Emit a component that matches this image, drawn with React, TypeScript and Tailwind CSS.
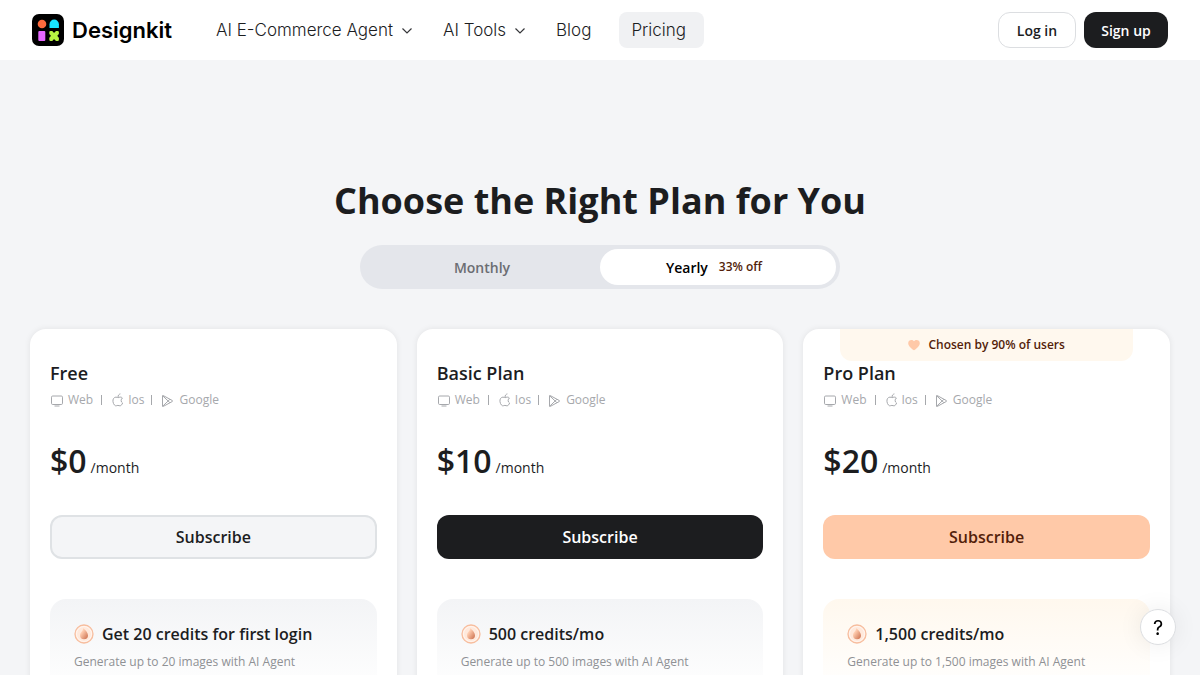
import { useState } from 'react';

type Plan = {
  name: string;
  price: number;
  credits: string;
  detail: string;
  button: string;
  panel: string;
  badge?: string;
};

const plans: Plan[] = [
  {
    name: 'Free',
    price: 0,
    credits: 'Get 20 credits for first login',
    detail: 'Generate up to 20 images with AI Agent',
    button: 'border-2 border-[#dfe2e5] bg-[#f4f5f7] text-[#1c1d1f]',
    panel: 'from-[#f3f4f6]',
  },
  {
    name: 'Basic Plan',
    price: 10,
    credits: '500 credits/mo',
    detail: 'Generate up to 500 images with AI Agent',
    button: 'bg-[#1c1d1f] text-white',
    panel: 'from-[#f3f4f6]',
  },
  {
    name: 'Pro Plan',
    price: 20,
    credits: '1,500 credits/mo',
    detail: 'Generate up to 1,500 images with AI Agent',
    button: 'bg-[#ffc9a8] text-[#531e0a]',
    panel: 'from-[#fff8ee]',
    badge: 'Chosen by 90% of users',
  },
];

function Logo() {
  return (
    <svg className="size-8" viewBox="0 0 32 32" aria-hidden="true">
      <rect width="32" height="32" rx="7" fill="#000" />
      <circle cx="10" cy="10" r="4.3" fill="#ff6a3d" />
      <path d="M17.5 14V10.2a4.7 4.7 0 0 1 9.4 0V14Z" fill="#18e5ff" />
      <rect x="6.3" y="17" width="7" height="10" rx="1" fill="#e667ff" />
      <path
        d="M17.3 18.2q0-1.2 1.2-1.2h1.4q.9 0 1.2.9.9 1.5 2 0 .4-.9 1.2-.9h1.4q1.2 0 1.2 1.2v1.3q0 .8-.8 1.2-1.5 1.1 0 2.2.8.4.8 1.2v1.7q0 1.2-1.2 1.2h-1.4q-.8 0-1.2-.9-1.1-1.5-2 0-.3.9-1.2.9h-1.4q-1.2 0-1.2-1.2v-1.7q0-.8.8-1.2 1.5-1.1 0-2.2-.8-.4-.8-1.2Z"
        fill="#b6f542"
      />
    </svg>
  );
}

function Chevron() {
  return (
    <svg className="size-4" viewBox="0 0 16 16" fill="none" stroke="#36373a" strokeWidth="1.2" aria-hidden="true">
      <path d="m3.5 5.500 4.500 4.500 4.500-4.500" />
    </svg>
  );
}

function WebIcon() {
  return (
    <svg className="size-3.5" viewBox="0 0 14 14" fill="none" stroke="currentColor" strokeWidth="1" aria-hidden="true">
      <rect x="1.5" y="3" width="11" height="8.5" rx="1.2" />
      <path d="M4.500 13h5" />
    </svg>
  );
}

function AppleIcon() {
  return (
    <svg className="size-3.5" viewBox="0 0 14 14" fill="none" stroke="currentColor" strokeWidth="1" strokeLinejoin="round" aria-hidden="true">
      <path d="M12.400 5C11.500 4 10.100 3.900 9 4.400c-.6.3-1.100.3-1.700 0C5.500 3.600 3.400 4.600 3 6.900c-.4 2.300.8 5.300 2.600 5.900.8.2 1.400-.4 2.300-.4s1.500.6 2.300.4c1.100-.3 1.900-1.400 2.400-2.800-1.900-.9-1.900-3.800-.2-5Z" />
      <path d="M8.100 4.200C7.900 2.500 8.800 1.200 10.400.9" />
    </svg>
  );
}

function PlayIcon() {
  return (
    <svg className="size-3.5" viewBox="0 0 14 14" fill="none" stroke="currentColor" strokeWidth="1" strokeLinejoin="round" aria-hidden="true">
      <path d="M2.500 3v10q0 .8.800.4l9-4.900q.8-.5 0-1l-9-4.900q-.8-.4-.8.400Z" />
      <path d="m2.700 2.800 7.200 6.900M2.700 13.200l7.200-6.900" />
    </svg>
  );
}

function CreditIcon() {
  return (
    <svg className="size-5" viewBox="0 0 20 20" aria-hidden="true">
      <defs>
        <linearGradient id="drop" x1="0" y1="0" x2="1" y2="1">
          <stop offset="0.3" stopColor="#ffcdb0" />
          <stop offset="1" stopColor="#c96a48" />
        </linearGradient>
      </defs>
      <circle cx="10" cy="10" r="9" fill="#ffe9dc" stroke="#f7bd9e" strokeWidth="1.3" />
      <circle cx="10" cy="10" r="7.5" fill="none" stroke="#fff6f0" strokeWidth="1" />
      <path d="M9.300 4.200c2.300 2 4.700 4.500 4.700 7a4 4 0 0 1-8 0c0-1.500.8-2.300 1.600-3.400C8.500 6.700 9 5.700 9.300 4.200Z" fill="url(#drop)" />
    </svg>
  );
}

function Header() {
  const link = 'flex h-9 items-center gap-1.5 pt-0.5';
  return (
    <header className="sticky top-0 z-10 flex h-[60px] items-center justify-between bg-white px-8">
      <div className="flex items-center">
        <a href="#" className="flex items-center gap-2 font-[Inter,sans-serif] text-[22px] font-semibold text-black">
          <Logo />
          Designkit
        </a>
        <nav className="ml-11 flex items-center gap-7 font-[Inter,sans-serif] text-[17px] font-light text-[#1c1d1f]">
          <button className={link}>AI E-Commerce Agent <Chevron /></button>
          <button className={link}>AI Tools <Chevron /></button>
          <a href="#" className={link}>Blog</a>
          <a href="#" className={`${link} rounded-lg bg-[#f0f1f3] pr-[18px] pl-3`}>Pricing</a>
        </nav>
      </div>
      <div className="flex gap-2 text-sm font-semibold">
        <button className="h-9 w-[78px] rounded-xl border border-[#dcdee1] pt-0.5 text-[#1c1d1f]">Log in</button>
        <button className="h-9 w-[84px] rounded-xl bg-[#1c1d1f] pt-0.5 text-white">Sign up</button>
      </div>
    </header>
  );
}

function PlanCard({ plan }: { plan: Plan }) {
  return (
    <article className="relative rounded-2xl bg-white px-5 pt-8 pb-10 shadow-[0_0_6px_rgba(0,0,0,0.08)]">
      {plan.badge && (
        <div className="absolute inset-x-[10%] top-0 flex h-8 items-center justify-center gap-2 rounded-b-xl bg-[#fff8ee] text-xs font-semibold text-[#531e0a]">
          <svg className="size-3" viewBox="0 0 12 12" fill="#ffc9a8" aria-hidden="true">
            <path d="M6 11.300C3.500 9.500.2 7.200.2 4.200.2 1 4.200 0 6 2.300 7.800 0 11.800 1 11.800 4.200c0 3-3.300 5.300-5.800 7.100Z" />
          </svg>
          {plan.badge}
        </div>
      )}
      <h2 className="text-lg leading-6 font-semibold">{plan.name}</h2>
      <div className="mt-[7px] flex h-4 items-center text-xs text-[#a6a8ac]">
        <WebIcon />
        <span className="ml-1">Web</span>
        <span className="mx-2 h-2.5 w-px bg-[#a6a8ac]" />
        <AppleIcon />
        <span className="ml-1">Ios</span>
        <span className="mr-2 ml-[7px] h-2.5 w-px bg-[#a6a8ac]" />
        <PlayIcon />
        <span className="ml-[5px]">Google</span>
      </div>
      <p className="mt-[31px] flex items-baseline gap-1">
        <span className="text-[32px] leading-11 font-semibold">${plan.price}</span>
        <span className="text-sm">/month</span>
      </p>
      <button className={`mt-8 h-11 w-full rounded-xl text-base font-semibold ${plan.button}`}>Subscribe</button>
      <div className={`mt-10 min-h-40 rounded-2xl bg-linear-to-b to-white to-60% p-6 ${plan.panel}`}>
        <h3 className="flex items-center gap-2 text-base leading-[22px] font-semibold">
          <CreditIcon />
          {plan.credits}
        </h3>
        <p className="mt-2 text-xs leading-[18px] text-[#8f9195]">{plan.detail}</p>
      </div>
    </article>
  );
}

export default function App() {
  const [yearly, setYearly] = useState(true);
  const tab = 'flex h-9 w-1/2 items-center justify-center rounded-full';

  return (
    <div className="min-h-screen bg-[#f4f5f7] font-['Open_Sans','Noto_Sans',sans-serif] text-[#1c1d1f]">
      <Header />
      <main className="mx-auto max-w-[1180px] px-5 pt-[116px] pb-10">
        <h1 className="text-center text-4xl leading-[50px] font-bold">Choose the Right Plan for You</h1>
        <div className="mx-auto mt-[19px] flex max-w-[480px] rounded-full bg-[#e4e6eb] p-1 text-sm font-semibold">
          <button onClick={() => setYearly(false)} className={yearly ? `${tab} pt-0.5 text-[#6b6d72]` : `${tab} bg-white pt-0.5 text-black`}>
            Monthly
          </button>
          <button onClick={() => setYearly(true)} className={yearly ? `${tab} bg-white pr-2 text-black` : `${tab} pr-2 text-[#6b6d72]`}>
            <span className="pt-0.5">Yearly</span>
            <span className="ml-[11px] text-xs text-[#531e0a]">33% off</span>
          </button>
        </div>
        <section className="mt-10 grid grid-cols-3 gap-5">
          {plans.map(plan => (
            <PlanCard key={plan.name} plan={plan} />
          ))}
        </section>
      </main>
      <button
        aria-label="Help"
        className="fixed right-6 bottom-[30px] size-9 rounded-full border border-[#dcdee1] bg-white pt-0.5 font-[Inter,sans-serif] text-xl leading-none text-black shadow-[0_0_24px_rgba(0,0,0,0.08)]"
      >
        ?
      </button>
    </div>
  );
}
